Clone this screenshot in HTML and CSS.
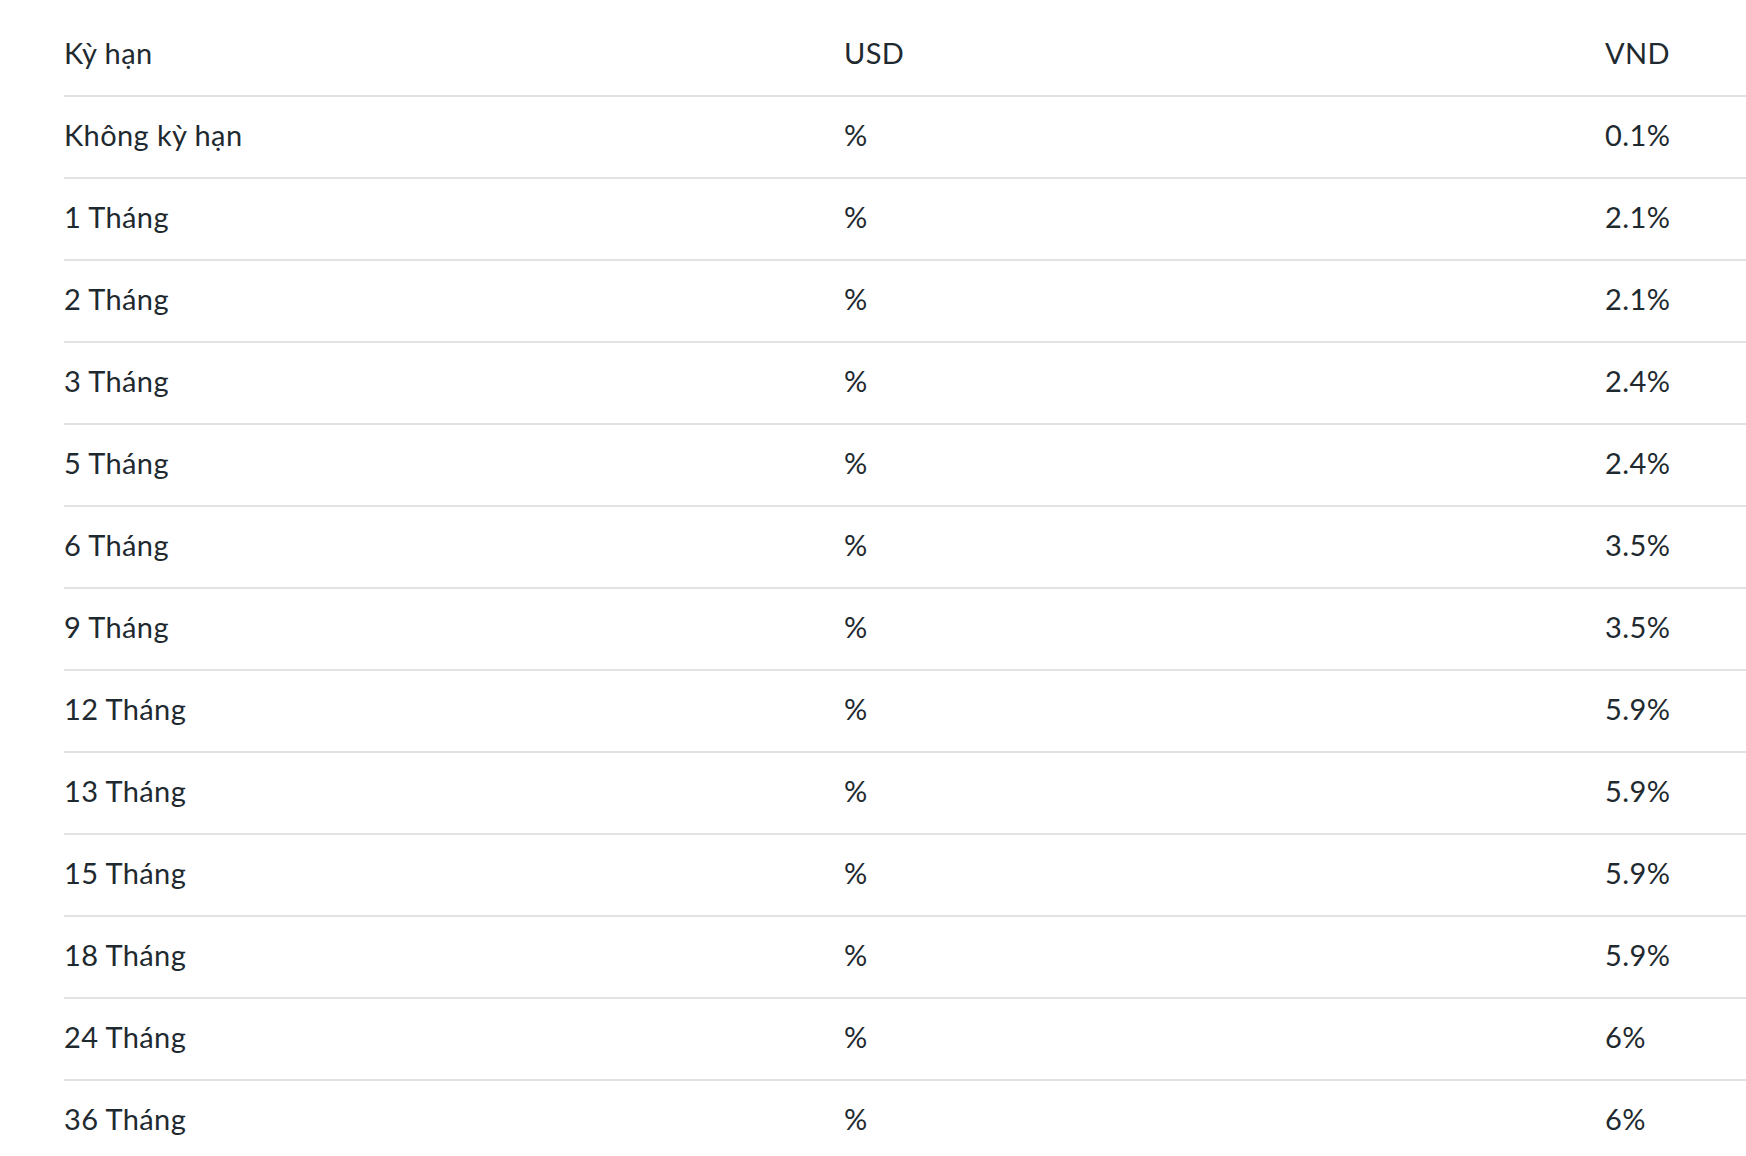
FILE: index.html
```html
<!DOCTYPE html>
<html lang="vi">
<head>
  <meta charset="UTF-8">
  <title>Lãi suất tiết kiệm</title>
  <link rel="stylesheet" href="styles.css">
</head>
<body>
  <table class="rates">
    <colgroup>
      <col class="col-term">
      <col class="col-usd">
      <col class="col-vnd">
    </colgroup>
    <thead>
      <tr><th>Kỳ hạn</th><th>USD</th><th>VND</th></tr>
    </thead>
    <tbody>
      <tr><td>Không kỳ hạn</td><td>%</td><td>0.1%</td></tr>
      <tr><td>1 Tháng</td><td>%</td><td>2.1%</td></tr>
      <tr><td>2 Tháng</td><td>%</td><td>2.1%</td></tr>
      <tr><td>3 Tháng</td><td>%</td><td>2.4%</td></tr>
      <tr><td>5 Tháng</td><td>%</td><td>2.4%</td></tr>
      <tr><td>6 Tháng</td><td>%</td><td>3.5%</td></tr>
      <tr><td>9 Tháng</td><td>%</td><td>3.5%</td></tr>
      <tr><td>12 Tháng</td><td>%</td><td>5.9%</td></tr>
      <tr><td>13 Tháng</td><td>%</td><td>5.9%</td></tr>
      <tr><td>15 Tháng</td><td>%</td><td>5.9%</td></tr>
      <tr><td>18 Tháng</td><td>%</td><td>5.9%</td></tr>
      <tr><td>24 Tháng</td><td>%</td><td>6%</td></tr>
      <tr><td>36 Tháng</td><td>%</td><td>6%</td></tr>
    </tbody>
  </table>
</body>
</html>
```

FILE: styles.css
```css
body {
  margin: 0;
  padding: 15px 0 0 64px;
  background: #fff;
  color: #1f2a30;
  font-family: Lato, "Noto Sans", sans-serif;
  overflow: hidden;
}
.rates {
  width: 1682px;
  border-collapse: collapse;
  table-layout: fixed;
}
.col-term {
  width: 780px;
}
.col-usd {
  width: 761px;
}
.rates th,
.rates td {
  height: 74px;
  padding: 0 0 6px;
  text-align: left;
  vertical-align: middle;
  font-size: 29px;
  font-weight: 400;
  letter-spacing: 0.4px;
  line-height: 1;
  border-bottom: 2px solid #e2e2e2;
}
.rates tbody tr:last-child td {
  border-bottom: none;
}
```
